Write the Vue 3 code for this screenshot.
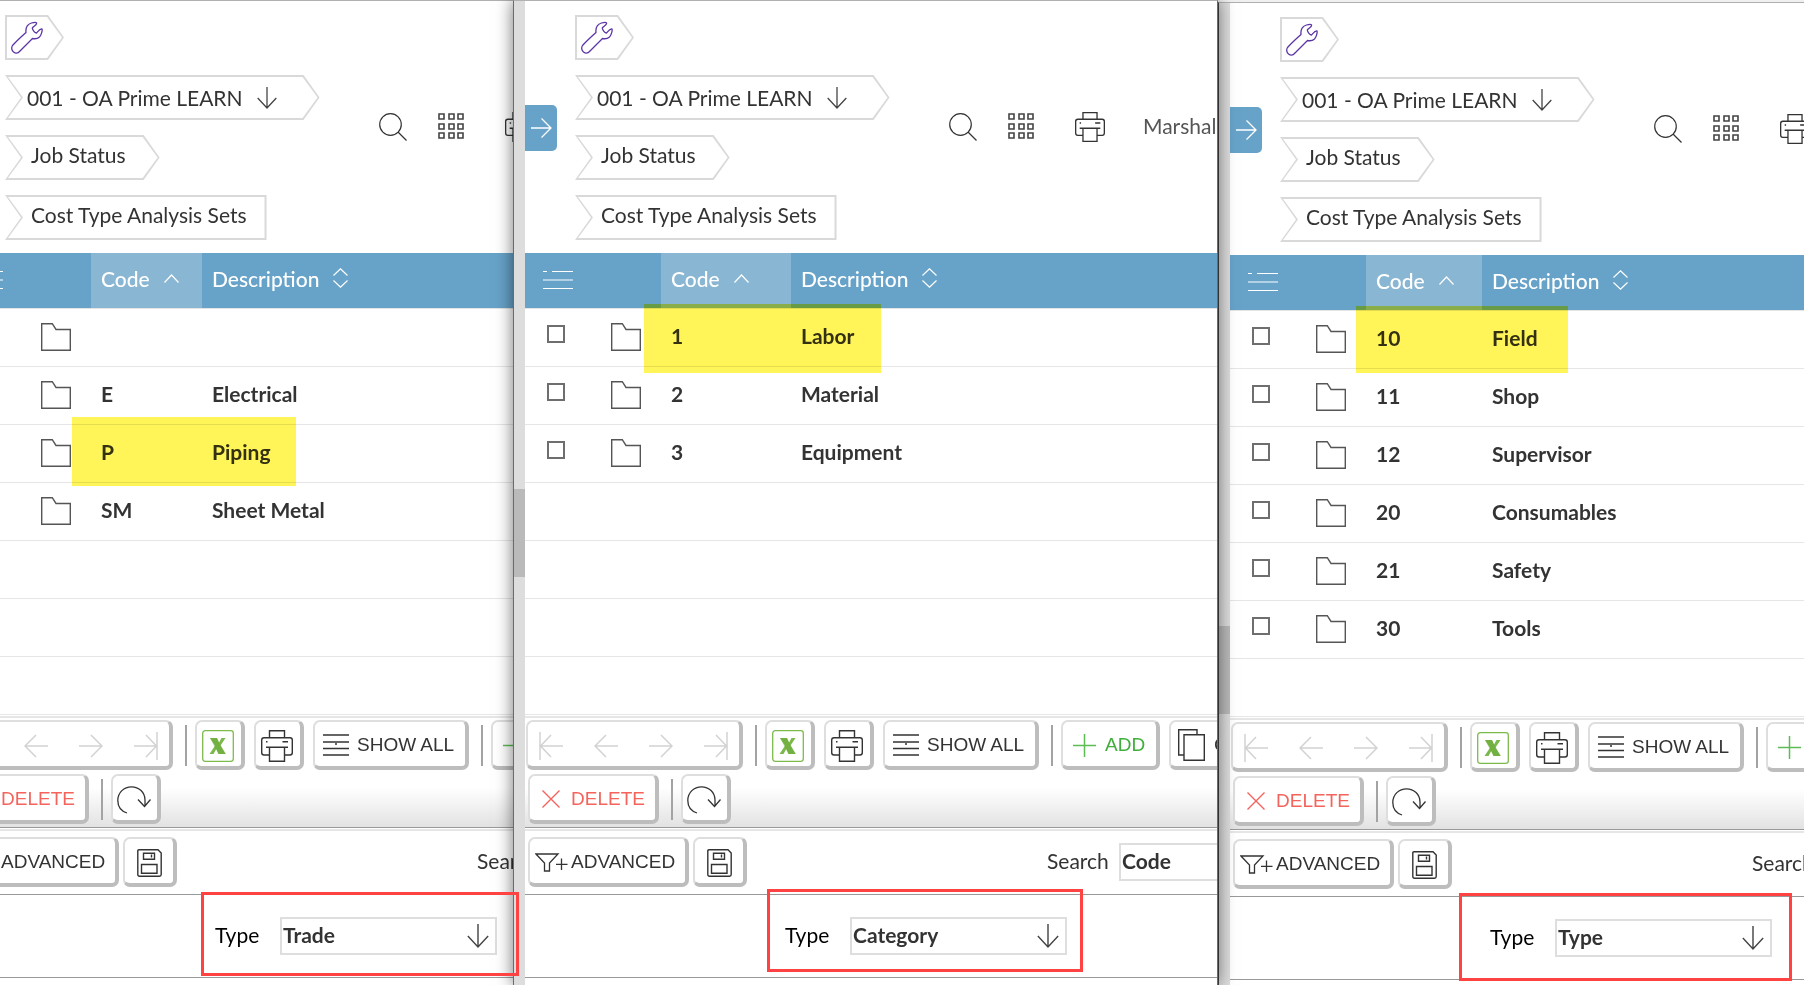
<script setup>
const windows = [
  {
    id: 'trade',
    codeWidth: 111,
    type: 'Trade',
    rows: [
      { code: '', text: '' },
      { code: 'E', text: 'Electrical' },
      { code: 'P', text: 'Piping' },
      { code: 'SM', text: 'Sheet Metal' },
    ],
  },
  {
    id: 'category',
    codeWidth: 130,
    type: 'Category',
    rows: [
      { code: '1', text: 'Labor' },
      { code: '2', text: 'Material' },
      { code: '3', text: 'Equipment' },
    ],
  },
  {
    id: 'type',
    codeWidth: 116,
    type: 'Type',
    rows: [
      { code: '10', text: 'Field' },
      { code: '11', text: 'Shop' },
      { code: '12', text: 'Supervisor' },
      { code: '20', text: 'Consumables' },
      { code: '21', text: 'Safety' },
      { code: '30', text: 'Tools' },
    ],
  },
]
const visibleRows = 7
</script>

<template>
  <svg class="symbols" aria-hidden="true">
    <symbol id="i-wrench" viewBox="0 0 32 33"><path d="M15 11.5C14.500 7.500 16 3.500 20.500 2C23 1.200 25 1.200 25.500 1.800C26.500 4 22 5.500 21.300 7C21.500 9 23.500 11.500 25.500 12C27 10.500 29 7.500 31 8C31.500 9 30.500 14 28.500 16C26.500 17.800 24 18 21.500 17.500L9 30C7 32.500 4.500 32.500 2.500 31C.5 29.500 .2 26.500 1.500 24.500C5.500 20 10.500 15.500 15 11.500Z" fill="none" stroke="#5b35a5" stroke-width="1.300" stroke-linejoin="round" /></symbol>
    <symbol id="i-down" viewBox="0 0 20 22"><path d="M10 0V21M.7 11L10 21L19.300 11" fill="none" stroke="#444" stroke-width="1.300" /></symbol>
    <symbol id="i-search" viewBox="0 0 29 28"><circle cx="11.500" cy="11.500" r="10.800" fill="none" stroke="#333" stroke-width="1.200" /><path d="M19 19L27.500 27.500" stroke="#333" stroke-width="1.300" /></symbol>
    <symbol id="i-grid" viewBox="0 0 27 27"><path d="M1 1h5v5H1zM11 1h5v5h-5zM20 1h5v5h-5zM1 11h5v5H1zM11 11h5v5h-5zM20 11h5v5h-5zM1 20h5v5H1zM11 20h5v5h-5zM20 20h5v5h-5z" fill="none" stroke="#444" stroke-width="1.600" /></symbol>
    <symbol id="i-print" viewBox="0 0 32 32"><path d="M8.500 7.500V.7H23.500V7.500M8.500 25H3Q.7 25 .7 22.500V10Q.7 7.700 3 7.700H29Q31.300 7.700 31.300 10V22.500Q31.300 25 29 25H23.500M5 17.300H27M8.500 17.300V31.300H23.500V17.300M21.500 11.700H27M5 11.700H6.500" fill="none" stroke="#333" stroke-width="1.400" /></symbol>
    <symbol id="i-right" viewBox="0 0 21 20"><path d="M0 10H20M10.500 .5L20 10L10.500 19.500" fill="none" stroke="#fff" stroke-width="1.300" /></symbol>
    <symbol id="i-menu" viewBox="0 0 30 20"><path d="M0 1.500H4M9 1.500H30M0 10H30M0 18.500H30" stroke="#fff" stroke-width="1.200" /></symbol>
    <symbol id="i-up" viewBox="0 0 15 9"><path d="M.5 8.500L7.500 1L14.500 8.500" fill="none" stroke="#fff" stroke-width="1.200" /></symbol>
    <symbol id="i-sort" viewBox="0 0 15 20"><path d="M.5 7.500L7.500 .8L14.500 7.500M.5 12.500L7.500 19.200L14.500 12.500" fill="none" stroke="#fff" stroke-width="1.200" /></symbol>
    <symbol id="i-folder" viewBox="0 0 30 28"><path d="M.7 .7H11.300L15 6.500H29.300V27.300H.7Z" fill="none" stroke="#555" stroke-width="1.400" /></symbol>
    <symbol id="i-first" viewBox="0 0 24 28"><path d="M1 0V28M24 14H2M12 3L1.500 14L12 25" fill="none" stroke="#d2d2d2" stroke-width="1.500" /></symbol>
    <symbol id="i-prev" viewBox="0 0 24 28"><path d="M24 14H1M12 3L1 14L12 25" fill="none" stroke="#d2d2d2" stroke-width="1.500" /></symbol>
    <symbol id="i-next" viewBox="0 0 24 28"><path d="M0 14H23M12 3L23 14L12 25" fill="none" stroke="#d2d2d2" stroke-width="1.500" /></symbol>
    <symbol id="i-last" viewBox="0 0 24 28"><path d="M23 0V28M0 14H22M12 3L22.500 14L12 25" fill="none" stroke="#d2d2d2" stroke-width="1.500" /></symbol>
    <symbol id="i-excel" viewBox="0 0 32 32"><rect x=".7" y=".7" width="30.600" height="30.600" rx="2.500" fill="#fff" stroke="#7dbb4d" stroke-width="1.300" /><path d="M8 8H15L17 12.500L19.500 8H23.500L18.500 15.500L23.500 24H16.500L14.300 19L11.500 24H7.500L13 15.800Z" fill="#7cb84c" /><path d="M15 8L17 12.500L24 24H16.500L8 8Z" fill="#68a838" opacity=".5" /></symbol>
    <symbol id="i-lines" viewBox="0 0 26 22"><path d="M0 1H26M0 8H26M0 14.500H26M0 21H26M12 10H14" stroke="#333" stroke-width="1.400" /></symbol>
    <symbol id="i-plus" viewBox="0 0 23 23"><path d="M11.500 0V23M0 11.500H23" stroke="#5ebc55" stroke-width="1.500" /></symbol>
    <symbol id="i-copy" viewBox="0 0 27 32"><path d="M6 26H.7V.7H19V5.500M6 5.700H26.300V31.300H6Z" fill="none" stroke="#333" stroke-width="1.400" /></symbol>
    <symbol id="i-cross" viewBox="0 0 18 18"><path d="M.5 .5L17.500 17.500M17.500 .5L.5 17.500" stroke="#f4645c" stroke-width="1.400" /></symbol>
    <symbol id="i-refresh" viewBox="0 0 34 28"><path d="M10 27C4 25 .8 20 .8 14.500C.8 6.500 7 .8 14.500 .8C22 .8 28 6.500 28 14V20.500M21 13.500L27.500 20.500L33.500 13.500" fill="none" stroke="#333" stroke-width="1.300" /></symbol>
    <symbol id="i-funnel" viewBox="0 0 33 19"><path d="M1 1H23L14.500 10V18H9.500V10ZM26.500 5.500V17M21 11.300H32.500" fill="none" stroke="#333" stroke-width="1.300" /></symbol>
    <symbol id="i-save" viewBox="0 0 25 28"><path d="M2 .8H21L24.200 4V25.500Q24.200 27.200 22.500 27.200H2.500Q.8 27.200 .8 25.500V2Q.8 .8 2 .8ZM6.500 4.300H17.500V10.300H6.500ZM4.500 15.500H20V24.300H4.500ZM14.500 5.500V8.500" fill="none" stroke="#333" stroke-width="1.400" /></symbol>
  </svg>

  <main class="desktop">
    <section v-for="w in windows" :key="w.id" class="window" :class="`window-${w.id}`">
      <div class="frame">
        <div v-if="w.id !== 'trade'" class="strip"><div class="thumb"></div></div>
        <div class="view">
          <div class="page">
            <header class="top">
              <button class="expand" aria-label="Expand"><svg width="21" height="20"><use href="#i-right" /></svg></button>
              <nav class="crumbs">
                <a href="#" class="crumb home" aria-label="Tools"><svg width="32" height="33"><use href="#i-wrench" /></svg></a>
                <a href="#" class="crumb job">001 - OA Prime LEARN<svg width="20" height="22"><use href="#i-down" /></svg></a>
                <a href="#" class="crumb">Job Status</a>
                <a href="#" class="crumb last">Cost Type Analysis Sets</a>
              </nav>
              <div class="tools">
                <button class="plain" aria-label="Search"><svg width="29" height="28"><use href="#i-search" /></svg></button>
                <button class="plain" aria-label="Apps"><svg width="27" height="27"><use href="#i-grid" /></svg></button>
                <button class="plain printer" aria-label="Print"><svg width="30" height="30"><use href="#i-print" /></svg></button>
                <span class="user">Marshal</span>
              </div>
            </header>

            <table class="list">
              <colgroup>
                <col class="col-check" />
                <col class="col-folder" />
                <col :style="{ width: w.codeWidth + 'px' }" />
                <col />
              </colgroup>
              <thead>
                <tr>
                  <th class="menu"><svg width="30" height="20"><use href="#i-menu" /></svg></th>
                  <th></th>
                  <th class="sorted"><span>Code<svg width="15" height="9"><use href="#i-up" /></svg></span></th>
                  <th><span>Description<svg width="15" height="20"><use href="#i-sort" /></svg></span></th>
                </tr>
              </thead>
              <tbody>
                <tr v-for="n in visibleRows" :key="n">
                  <template v-if="w.rows[n - 1]">
                    <td class="check"><input type="checkbox" :aria-label="'Select ' + w.rows[n - 1].text" /></td>
                    <td class="folder"><svg width="30" height="28"><use href="#i-folder" /></svg></td>
                    <td>{{ w.rows[n - 1].code }}</td>
                    <td>{{ w.rows[n - 1].text }}</td>
                  </template>
                  <td v-else colspan="4"></td>
                </tr>
              </tbody>
            </table>

            <div class="toolbar">
              <div class="bar">
                <div class="box pager">
                  <button v-for="i in ['first', 'prev', 'next', 'last']" :key="i" class="plain" :aria-label="i">
                    <svg width="24" height="28"><use :href="'#i-' + i" /></svg>
                  </button>
                </div>
                <i class="sep"></i>
                <button class="box square" aria-label="Excel"><svg width="32" height="32"><use href="#i-excel" /></svg></button>
                <button class="box square" aria-label="Print list"><svg width="32" height="32"><use href="#i-print" /></svg></button>
                <button class="box show"><svg width="26" height="22"><use href="#i-lines" /></svg>SHOW ALL</button>
                <i class="sep"></i>
                <button class="box add"><svg width="23" height="23"><use href="#i-plus" /></svg>ADD</button>
                <button class="box copy"><svg width="27" height="32"><use href="#i-copy" /></svg>COPY</button>
              </div>
              <div class="bar second">
                <button class="box delete"><svg width="18" height="18"><use href="#i-cross" /></svg>DELETE</button>
                <i class="sep"></i>
                <button class="box square" aria-label="Refresh"><svg width="34" height="28"><use href="#i-refresh" /></svg></button>
              </div>
            </div>

            <div class="searchbar">
              <button class="box advanced"><svg width="33" height="19"><use href="#i-funnel" /></svg>ADVANCED</button>
              <button class="box save" aria-label="Save"><svg width="25" height="28"><use href="#i-save" /></svg></button>
              <label class="search-label" :for="w.id + '-search'">Search</label>
              <div class="field">
                <select :id="w.id + '-search'"><option>Code</option></select>
                <svg width="22" height="24"><use href="#i-down" /></svg>
              </div>
            </div>

            <div class="typebar">
              <label :for="w.id + '-type'">Type</label>
              <div class="field">
                <select :id="w.id + '-type'"><option>{{ w.type }}</option></select>
                <svg width="22" height="24"><use href="#i-down" /></svg>
              </div>
            </div>
          </div>
        </div>
      </div>
      <div class="marker"></div>
      <div class="callout"></div>
    </section>
  </main>
</template>

<style>
body { margin: 0; background: #fff; }
</style>

<style scoped>
.symbols { position: absolute; width: 0; height: 0; }
.desktop {
  display: grid;
  grid-template-columns: 513fr 705fr 586fr;
  min-height: 100vh;
  overflow: hidden;
  font-family: Lato, "Liberation Sans", sans-serif;
  font-size: 21px;
  color: #333;
}
.desktop * { box-sizing: border-box; }
.desktop svg { display: block; flex: none; }
.window { position: relative; min-width: 0; background: #fff; }
.window-category { z-index: 1; box-shadow: 0 0 16px rgba(0, 0, 0, .55); }
.frame { display: flex; height: 100%; overflow: hidden; border-top: 1px solid #b0b0b0; }
.window-category .frame { border-left: 1px solid #1e80cc; border-right: 1px solid #1e80cc; }
.window-type { border-top: 2px solid #f0f0f0; }
.window-type .frame { border-left: 1px solid #444; }
.strip { flex: none; width: 11px; background: #ddd; }
.thumb { height: 88px; margin-top: 488px; background: #bababa; }
.window-type .thumb { margin-top: 623px; }
.view { flex: 1; min-width: 0; overflow: hidden; }
.page { min-width: 860px; }
.window-trade .page { margin-left: -45px; }

.top { display: flex; align-items: center; padding: 14px 0 13px; }
.expand {
  display: flex;
  align-items: center;
  width: 32px;
  height: 46px;
  margin-right: 18px;
  padding: 0 0 0 6px;
  border: 0;
  border-radius: 0 5px 5px 0;
  background: #67a2c8;
}
.crumbs { display: flex; flex-direction: column; align-items: flex-start; gap: 15px; width: 374px; }
.crumb {
  position: relative;
  z-index: 0;
  display: flex;
  align-items: center;
  height: 45px;
  padding: 0 34px 6px 26px;
  background: #d9d9d9;
  color: #333;
  text-decoration: none;
  white-space: nowrap;
  clip-path: polygon(0 0, calc(100% - 16px) 0, 100% 50%, calc(100% - 16px) 100%, 0 100%, 16px 50%);
}
.crumb::before {
  content: "";
  position: absolute;
  z-index: -1;
  inset: 2px 2px 2px 3px;
  background: #fff;
  clip-path: polygon(0 0, calc(100% - 15px) 0, 100% 50%, calc(100% - 15px) 100%, 0 100%, 15px 50%);
}
.crumb.home { padding: 0 21px 0 6px; clip-path: polygon(0 0, calc(100% - 16px) 0, 100% 50%, calc(100% - 16px) 100%, 0 100%); }
.crumb.home::before { left: 2px; clip-path: polygon(0 0, calc(100% - 15px) 0, 100% 50%, calc(100% - 15px) 100%, 0 100%); }
.crumb.job { gap: 14px; padding: 0 43px 0 22px; }
.crumb.last { padding-right: 20px; clip-path: polygon(0 0, 100% 0, 100% 100%, 0 100%, 16px 50%); }
.crumb.last::before { clip-path: polygon(0 0, 100% 0, 100% 100%, 0 100%, 15px 50%); }
.tools { display: flex; align-items: center; gap: 30px; padding-bottom: 2px; }
.printer { margin-left: 10px; }
.user { margin-left: 8px; padding-bottom: 3px; color: #555; }
.plain { padding: 0; border: 0; background: none; }

.list { width: 100%; table-layout: fixed; border-collapse: separate; border-spacing: 0; }
.col-check { width: 75px; }
.col-folder { width: 61px; }
.list th {
  height: 56px;
  padding: 0 10px;
  background: #67a2c8;
  border-bottom: 1px solid #e4e4e4;
  color: #fff;
  font-weight: 500;
  text-align: left;
}
.list th.menu { padding: 0 0 2px 18px; }
.list th.sorted { background: #89b6d2; }
.list th span { display: flex; align-items: center; gap: 14px; padding-bottom: 5px; }
.list td { height: 58px; padding: 0 10px 4px; border-bottom: 1px solid #e6e6e6; font-weight: 700; white-space: nowrap; }
.list td.check { padding: 0 0 8px 22px; }
.list td.folder { padding: 0 0 2px 11px; }
.check input { display: block; appearance: none; width: 18px; height: 18px; margin: 0; border: 2px solid #6e6e6e; background: #fff; }

.toolbar {
  margin-top: 1px;
  padding: 2px 0 3px;
  border-top: 2px solid #e6e6e6;
  border-bottom: 1px solid #999;
  background: linear-gradient(#fff 64%, #e2e2e2);
}
.bar { display: flex; align-items: center; gap: 9px; padding-left: 1px; }
.bar.second { margin-top: 4px; padding-left: 3px; }
.box {
  display: flex;
  flex: none;
  align-items: center;
  height: 50px;
  padding: 2px 11px 0 8px;
  border: solid #dedede;
  border-width: 2px 4px 4px 2px;
  border-right-color: #bdbdbd;
  border-bottom-color: #bdbdbd;
  border-radius: 7px;
  background: #fff;
  color: #333;
  font-family: "Liberation Sans", Arial, sans-serif;
  font-size: 19px;
  white-space: nowrap;
}
.pager { width: 217px; gap: 31px; padding: 3px 0 0 11px; }
.square { justify-content: center; width: 50px; padding: 3px 2px 0 0; }
.show { width: 156px; gap: 8px; }
.add { width: 99px; gap: 9px; padding-left: 10px; color: #3fae3a; }
.copy { gap: 9px; padding-left: 7px; }
.delete { width: 131px; gap: 11px; padding-left: 12px; color: #f4645c; }
.sep { flex: none; width: 2px; height: 41px; margin: 0 -1px 0 3px; background: #a3a3a3; }
.searchbar {
  display: flex;
  align-items: center;
  margin-top: 1px;
  padding: 6px 0 7px 3px;
  border-top: 2px solid #e6e6e6;
  border-bottom: 1px solid #999;
}
.advanced { width: 161px; gap: 3px; padding-left: 5px; }
.save { justify-content: center; width: 54px; margin-left: 4px; padding: 3px 0 0; }
.search-label { width: 61px; margin: 0 11px 0 300px; padding-bottom: 4px; }
.field { position: relative; width: 217px; height: 38px; }
.field select {
  width: 100%;
  height: 100%;
  padding: 0 30px 3px 1px;
  appearance: none;
  border: 2px solid #dedede;
  border-radius: 0;
  background: #fff;
  color: #333;
  font: 700 21px Lato, "Liberation Sans", sans-serif;
}
.field svg { position: absolute; top: 7px; right: 8px; pointer-events: none; }
.typebar { display: flex; align-items: center; gap: 22px; padding: 22px 0 22px 260px; border-bottom: 1px solid #999; color: #000; }
.typebar label { width: 43px; padding-bottom: 4px; }

.marker { position: absolute; background: #fff458; mix-blend-mode: multiply; }
.callout { position: absolute; z-index: 5; border: 3px solid #ff4343; }
.window-trade .marker { left: 72px; top: 417px; width: 224px; height: 69px; }
.window-trade .callout { left: 201px; top: 892px; width: 318px; height: 84px; }
.window-category .marker { left: 131px; top: 304px; width: 237px; height: 69px; }
.window-category .callout { left: 254px; top: 889px; width: 316px; height: 83px; }
.window-type .marker { left: 138px; top: 304px; width: 212px; height: 67px; }
.window-type .callout { left: 241px; top: 891px; width: 333px; height: 88px; }
</style>
